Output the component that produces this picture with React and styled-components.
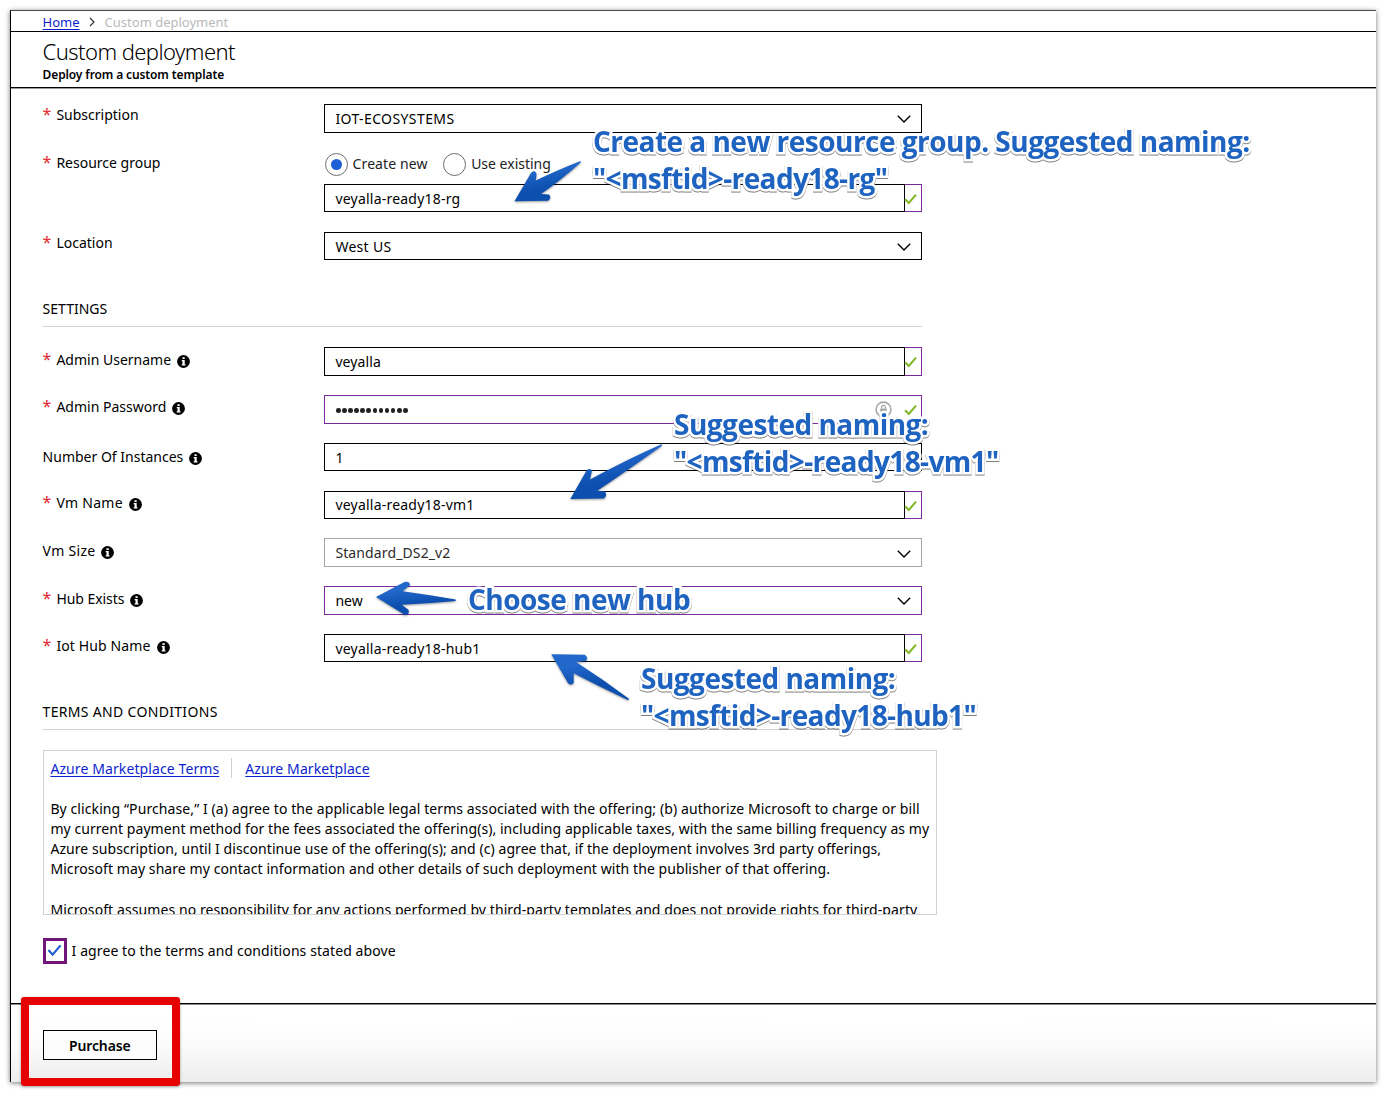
import React from "react";
import styled, { createGlobalStyle } from "styled-components";

const GlobalStyle = createGlobalStyle`
  body {
    margin: 0;
    background: #fff;
    color: #000;
    font: 400 14px/20px "Noto Sans", "Open Sans", sans-serif;
  }
  *, *::before, *::after { box-sizing: border-box; }
`;

const Stage = styled.div`
  position: relative;
  width: 1386px;
  height: 1098px;
  padding: 10px;
  overflow: hidden;
`;

const Blade = styled.div`
  display: flex;
  flex-direction: column;
  width: 1366px;
  height: 1072px;
  border-top: 1px solid #4a4a4a;
  border-left: 1px solid #000;
  background: #fff;
  box-shadow: 0 1px 5px rgba(0, 0, 0, 0.55);
`;

const Breadcrumb = styled.nav`
  display: flex;
  align-items: center;
  height: 21px;
  padding-left: 31.6px;
  padding-top: 2px;
  border-bottom: 1px solid #000;
  font-size: 13px;
  line-height: 18px;
`;

const Link = styled.a`
  color: #0c1fce;
  text-decoration: underline;
  text-decoration-thickness: 1px;
  text-underline-offset: 2px;
  letter-spacing: ${(p) => p.$track || 0}px;
  white-space: nowrap;
`;

const CrumbArrow = styled.svg`
  width: 6px;
  height: 10px;
  margin: 0 10px 1px 9px;
`;

const CrumbHere = styled.span`
  color: #b9b9b9;
`;

const Header = styled.header`
  height: 56px;
  padding: 5px 0 0 31.6px;
  border-bottom: 1px solid #000;
  box-shadow: 0 1px 0 #9a9a9a;
`;

const Title = styled.h1`
  margin: 0;
  font-size: 22px;
  font-weight: 300;
  line-height: 29px;
  letter-spacing: -0.56px;
`;

const Subtitle = styled.div`
  padding-top: 1px;
  font-size: 12px;
  font-weight: 600;
  line-height: 16px;
  letter-spacing: -0.12px;
`;

const Form = styled.main`
  display: flex;
  flex-direction: column;
  flex: 1;
  padding: 16px 0 0 31.6px;
`;

const Group = styled.section`
  display: flex;
  flex-direction: column;
  gap: ${(p) => p.$gap}px;
`;

const Row = styled.div`
  display: grid;
  grid-template-columns: 281.4px 598px;
  align-items: start;
`;

const Label = styled.div`
  display: flex;
  align-items: center;
  padding-top: ${(p) => p.$drop}px;
  letter-spacing: ${(p) => p.$track || 0}px;
  white-space: nowrap;
`;

const Required = styled.span`
  width: 13.8px;
  color: #e0282e;
  font-size: 16px;
  line-height: 19px;
  align-self: flex-start;
`;

const InfoIcon = styled.svg`
  width: 13px;
  height: 13px;
  margin: 3px 0 0 6px;
`;

const Field = styled.div`
  display: flex;
  height: 28.6px;
`;

const borders = { plain: "#000", edited: "#7a2b9c", muted: "#a6a6a6" };

const Box = styled.div`
  display: flex;
  flex: 1;
  align-items: center;
  padding: 0 10.4px;
  padding-right: ${(p) => p.$right || 10}px;
  border: 1px solid ${(p) => borders[p.$kind || "plain"]};
  color: ${(p) => (p.$kind === "muted" ? "#2b2b2b" : "#000")};
  letter-spacing: ${(p) => p.$track || 0}px;
  background: #fff;
`;

const Value = styled.span`
  flex: 1;
  padding-top: 1.4px;
`;

const TickCell = styled.div`
  display: flex;
  align-items: center;
  justify-content: center;
  width: 17px;
  padding-right: 4px;
  border: 1px solid #7a2b9c;
  border-left: 0;
`;

const TickSvg = styled.svg`
  flex: none;
  width: 13px;
  height: 12px;
  margin-top: 2px;
`;

const ChevronSvg = styled.svg`
  width: 14px;
  height: 8px;
  margin-top: 2px;
`;

const Radios = styled.div`
  display: flex;
  align-items: center;
  height: 24px;
  margin: 1px 0 6.6px;
  padding-left: 0.6px;
  color: #222;
`;

const Radio = styled.span`
  display: flex;
  align-items: center;
  justify-content: center;
  width: 23px;
  height: 23px;
  margin-right: 5px;
  border: 1px solid #6e6e6e;
  border-radius: 50%;

  &::after {
    content: "";
    width: 11px;
    height: 11px;
    border-radius: 50%;
    background: ${(p) => (p.$on ? "#1f5fd6" : "transparent")};
  }
`;

const RadioText = styled.span`
  margin-right: 15.6px;
  padding-bottom: 2px;
  letter-spacing: ${(p) => p.$track || 0}px;
`;

const Dots = styled.span`
  display: flex;
  flex: 1;
  gap: 1.5px;
  padding: 2px 0 0 0.6px;
`;

const Dot = styled.i`
  width: 4.6px;
  height: 4.6px;
  border-radius: 50%;
  background: #222;
`;

const LockSvg = styled.svg`
  width: 17px;
  height: 17px;
  margin-right: 12px;
`;

const SectionTitle = styled.h2`
  width: 879.4px;
  height: 28px;
  margin: ${(p) => p.$top}px 0 ${(p) => p.$bottom}px;
  border-bottom: 1px solid #d2d2d2;
  font-size: 14px;
  font-weight: 400;
  line-height: 20px;
  letter-spacing: ${(p) => p.$track || 0}px;
`;

const Terms = styled.div`
  width: 894.6px;
  height: 165px;
  padding: 8px 7px 0 6.8px;
  overflow: hidden;
  border: 1px solid #d2d2d2;
  line-height: 20.2px;
`;

const TermsLinks = styled.div`
  display: flex;
  align-items: center;
  height: 20px;
  margin-bottom: 20px;
`;

const Separator = styled.span`
  width: 1px;
  height: 20px;
  margin: 0 13px 2px 12px;
  background: #cfcfcf;
`;

const Line = styled.div`
  letter-spacing: ${(p) => p.$track}px;
  white-space: nowrap;
`;

const Gap = styled.div`
  height: 20px;
`;

const Agree = styled.label`
  display: flex;
  align-items: center;
  gap: 5px;
  height: 26px;
  margin-top: 23px;
  letter-spacing: 0.09px;
`;

const Checkbox = styled.span`
  display: flex;
  align-items: center;
  justify-content: center;
  width: 24px;
  height: 26px;
  border: 3px solid #6f157c;
  background: #fff;
`;

const CheckSvg = styled.svg`
  width: 15px;
  height: 13px;
`;

const Footer = styled.footer`
  height: 79px;
  padding: 26px 0 0 31.6px;
  border-top: 1px solid #000;
  box-shadow: inset 0 1px 0 #8a8a8a;
  background: linear-gradient(#fff 20%, #fbfbfb 55%, #ededed);
`;

const PurchaseButton = styled.button`
  display: block;
  width: 114.4px;
  height: 30px;
  padding: 1px 0 0;
  border: 1px solid #000;
  background: #fdfdfd;
  color: #000;
  font: 600 14px/20px "Noto Sans", sans-serif;
  letter-spacing: -0.1px;
`;

const Highlight = styled.div`
  position: absolute;
  left: 21px;
  top: 997px;
  width: 159px;
  height: 89px;
  border: 8px solid #e60202;
  border-radius: 3px;
  box-shadow: 0 1px 3px rgba(0, 0, 0, 0.35);
`;

const Note = styled.div`
  position: absolute;
  left: ${(p) => p.$x}px;
  top: ${(p) => p.$y}px;
  color: #1f63c0;
  font: 700 28px/37.2px "Open Sans", "Noto Sans", sans-serif;
  letter-spacing: -0.52px;
  white-space: nowrap;
  -webkit-text-stroke: 5px #fff;
  stroke-linejoin: round;
  paint-order: stroke fill;
  filter: drop-shadow(0 1px 0.6px rgba(0, 0, 0, 0.5));
`;

const Sample = styled.div`
  letter-spacing: -0.63px;
`;

const ArrowLayer = styled.svg`
  position: absolute;
  inset: 0;
  width: 1386px;
  height: 1098px;
  pointer-events: none;
  filter: drop-shadow(0 1px 1px rgba(0, 0, 0, 0.4));
`;

const Info = () => (
  <InfoIcon viewBox="0 0 13 13">
    <circle cx="6.5" cy="6.5" r="6.4" fill="#000" />
    <path d="M5.5 2.2h2.2v1.8H5.5zM4.7 5h3v4.3h.8v1.2H4.7V9.3h.8V6.2h-.8z" fill="#fff" />
  </InfoIcon>
);

const Tick = () => (
  <TickSvg viewBox="0 0 13 12">
    <path d="M1 6.2 4.8 10 12 1.6" fill="none" stroke="#86b82e" strokeWidth="2.2" />
  </TickSvg>
);

const Chevron = () => (
  <ChevronSvg viewBox="0 0 14 8">
    <path d="M.8.8 7 7 13.2.8" fill="none" stroke="#000" strokeWidth="1.4" />
  </ChevronSvg>
);

const Lock = () => (
  <LockSvg viewBox="0 0 17 17">
    <circle cx="8.5" cy="8.5" r="7.4" fill="none" stroke="#a8a8a8" strokeWidth="1.6" />
    <path d="M5.3 7.6h6.4v4.2H5.3z" fill="#a0a0a0" />
    <path d="M6.6 7.6V6.2a1.9 1.9 0 0 1 3.8 0v1.4" fill="none" stroke="#a0a0a0" strokeWidth="1.2" />
  </LockSvg>
);

const FieldLabel = ({ text, required, info, drop = 2.5, track }) => (
  <Label $drop={drop} $track={track}>
    {required && <Required>*</Required>}
    <span>{text}</span>
    {info && <Info />}
  </Label>
);

const ValidInput = ({ value, track }) => (
  <Field>
    <Box $track={track}>
      <Value>{value}</Value>
    </Box>
    <TickCell>
      <Tick />
    </TickCell>
  </Field>
);

const Select = ({ value, kind, track }) => (
  <Field>
    <Box $kind={kind} $track={track}>
      <Value>{value}</Value>
      <Chevron />
    </Box>
  </Field>
);

const PasswordInput = () => (
  <Field>
    <Box $kind="edited" $right={3.5}>
      <Dots>
        {Array.from({ length: 12 }, (_, i) => (
          <Dot key={i} />
        ))}
      </Dots>
      <Lock />
      <Tick />
    </Box>
  </Field>
);

const arrows = [
  "M514.5 201.3 531 173Q533.5 170 536 172.5 537 174 535.7 180.5Q560 169 580.5 161L580.7 162.5Q560 181 541 194L549 194.5Q552 198 548 200.8Z",
  "M570.3 499 586.3 471Q589 467.5 592 470.5L590 479.5Q628 459 661.5 444.3L662 445.7Q628 470 597.3 490.7L604.5 491.3Q608 495 604 498.5Z",
  "M376 597 404.5 582Q409.5 581 410 585L402.7 591.3Q430 595 455.7 599.6V601Q430 603.5 401.7 604.7L408.5 609.8Q410 614.5 405 615Z",
  "M551.3 654.3 584.7 654.7Q589 657.5 585.8 661L576.4 662.3Q604 680 629 698.8L628.3 700.3Q600 687 573.7 673.3V682.7Q571 686.5 567.8 682.7Z",
];

export default function App() {
  return (
    <Stage>
      <GlobalStyle />
      <Blade>
        <Breadcrumb>
          <Link>Home</Link>
          <CrumbArrow viewBox="0 0 6 10">
            <path d="M1 1 5 5 1 9" fill="none" stroke="#333" strokeWidth="1.2" />
          </CrumbArrow>
          <CrumbHere>Custom deployment</CrumbHere>
        </Breadcrumb>
        <Header>
          <Title>Custom deployment</Title>
          <Subtitle>Deploy from a custom template</Subtitle>
        </Header>
        <Form>
          <Group $gap={19.4}>
            <Row>
              <FieldLabel text="Subscription" required drop={1} />
              <Select value="IOT-ECOSYSTEMS" track={0.4} />
            </Row>
            <Row>
              <FieldLabel text="Resource group" required drop={1} />
              <div>
                <Radios>
                  <Radio $on />
                  <RadioText $track={0.1}>Create new</RadioText>
                  <Radio />
                  <RadioText>Use existing</RadioText>
                </Radios>
                <ValidInput value="veyalla-ready18-rg" track={0.22} />
              </div>
            </Row>
            <Row>
              <FieldLabel text="Location" required drop={1} />
              <Select value="West US" track={0.3} />
            </Row>
          </Group>

          <SectionTitle $top={39} $bottom={20}>
            SETTINGS
          </SectionTitle>
          <Group $gap={19.2}>
            <Row>
              <FieldLabel text="Admin Username" required info />
              <ValidInput value="veyalla" track={0.1} />
            </Row>
            <Row>
              <FieldLabel text="Admin Password" required info />
              <PasswordInput />
            </Row>
            <Row>
              <FieldLabel text="Number Of Instances" info drop={3.8} />
              <Field>
                <Box>
                  <Value>1</Value>
                </Box>
              </Field>
            </Row>
            <Row>
              <FieldLabel text="Vm Name" required info track={0.28} />
              <ValidInput value="veyalla-ready18-vm1" track={0.22} />
            </Row>
            <Row>
              <FieldLabel text="Vm Size" info track={0.3} />
              <Select value="Standard_DS2_v2" kind="muted" track={0.12} />
            </Row>
            <Row>
              <FieldLabel text="Hub Exists" required info track={-0.05} />
              <Select value="new" kind="edited" />
            </Row>
            <Row>
              <FieldLabel text="Iot Hub Name" required info track={0.12} />
              <ValidInput value="veyalla-ready18-hub1" track={0.22} />
            </Row>
          </Group>

          <SectionTitle $top={39.4} $bottom={20} $track={0.32}>
            TERMS AND CONDITIONS
          </SectionTitle>
          <Terms>
            <TermsLinks>
              <Link $track={0.1}>Azure Marketplace Terms</Link>
              <Separator />
              <Link $track={0.1}>Azure Marketplace</Link>
            </TermsLinks>
            <Line $track={0.09}>
              By clicking “Purchase,” I (a) agree to the applicable legal terms associated with the offering; (b) authorize Microsoft to charge or bill
            </Line>
            <Line $track={0.06}>
              my current payment method for the fees associated the offering(s), including applicable taxes, with the same billing frequency as my
            </Line>
            <Line $track={0.065}>
              Azure subscription, until I discontinue use of the offering(s); and (c) agree that, if the deployment involves 3rd party offerings,
            </Line>
            <Line $track={0.075}>
              Microsoft may share my contact information and other details of such deployment with the publisher of that offering.
            </Line>
            <Gap />
            <Line $track={0.09}>
              Microsoft assumes no responsibility for any actions performed by third-party templates and does not provide rights for third-party
            </Line>
          </Terms>
          <Agree>
            <Checkbox>
              <CheckSvg viewBox="0 0 16 14">
                <path d="M1.5 6.5 6 11.5 14.5 1.5" fill="none" stroke="#1f5fd6" strokeWidth="2.4" />
              </CheckSvg>
            </Checkbox>
            <span>I agree to the terms and conditions stated above</span>
          </Agree>
        </Form>
        <Footer>
          <PurchaseButton>Purchase</PurchaseButton>
        </Footer>
      </Blade>

      <ArrowLayer viewBox="0 0 1386 1098">
        <defs>
          <linearGradient id="arrowFill" x1="0" y1="0" x2="0.3" y2="1">
            <stop offset="0.3" stopColor="#2268cb" />
            <stop offset="0.75" stopColor="#0c4fae" />
          </linearGradient>
        </defs>
        {arrows.map((d) => (
          <path key={d} d={d} fill="url(#arrowFill)" />
        ))}
      </ArrowLayer>
      <Note $x={593} $y={123}>
        Create a new resource group. Suggested naming:
        <Sample>"&lt;msftid&gt;-ready18-rg"</Sample>
      </Note>
      <Note $x={674} $y={406}>
        Suggested naming:
        <Sample>"&lt;msftid&gt;-ready18-vm1"</Sample>
      </Note>
      <Note $x={468} $y={581}>Choose new hub</Note>
      <Note $x={641} $y={660}>
        Suggested naming:
        <Sample>"&lt;msftid&gt;-ready18-hub1"</Sample>
      </Note>
      <Highlight />
    </Stage>
  );
}
